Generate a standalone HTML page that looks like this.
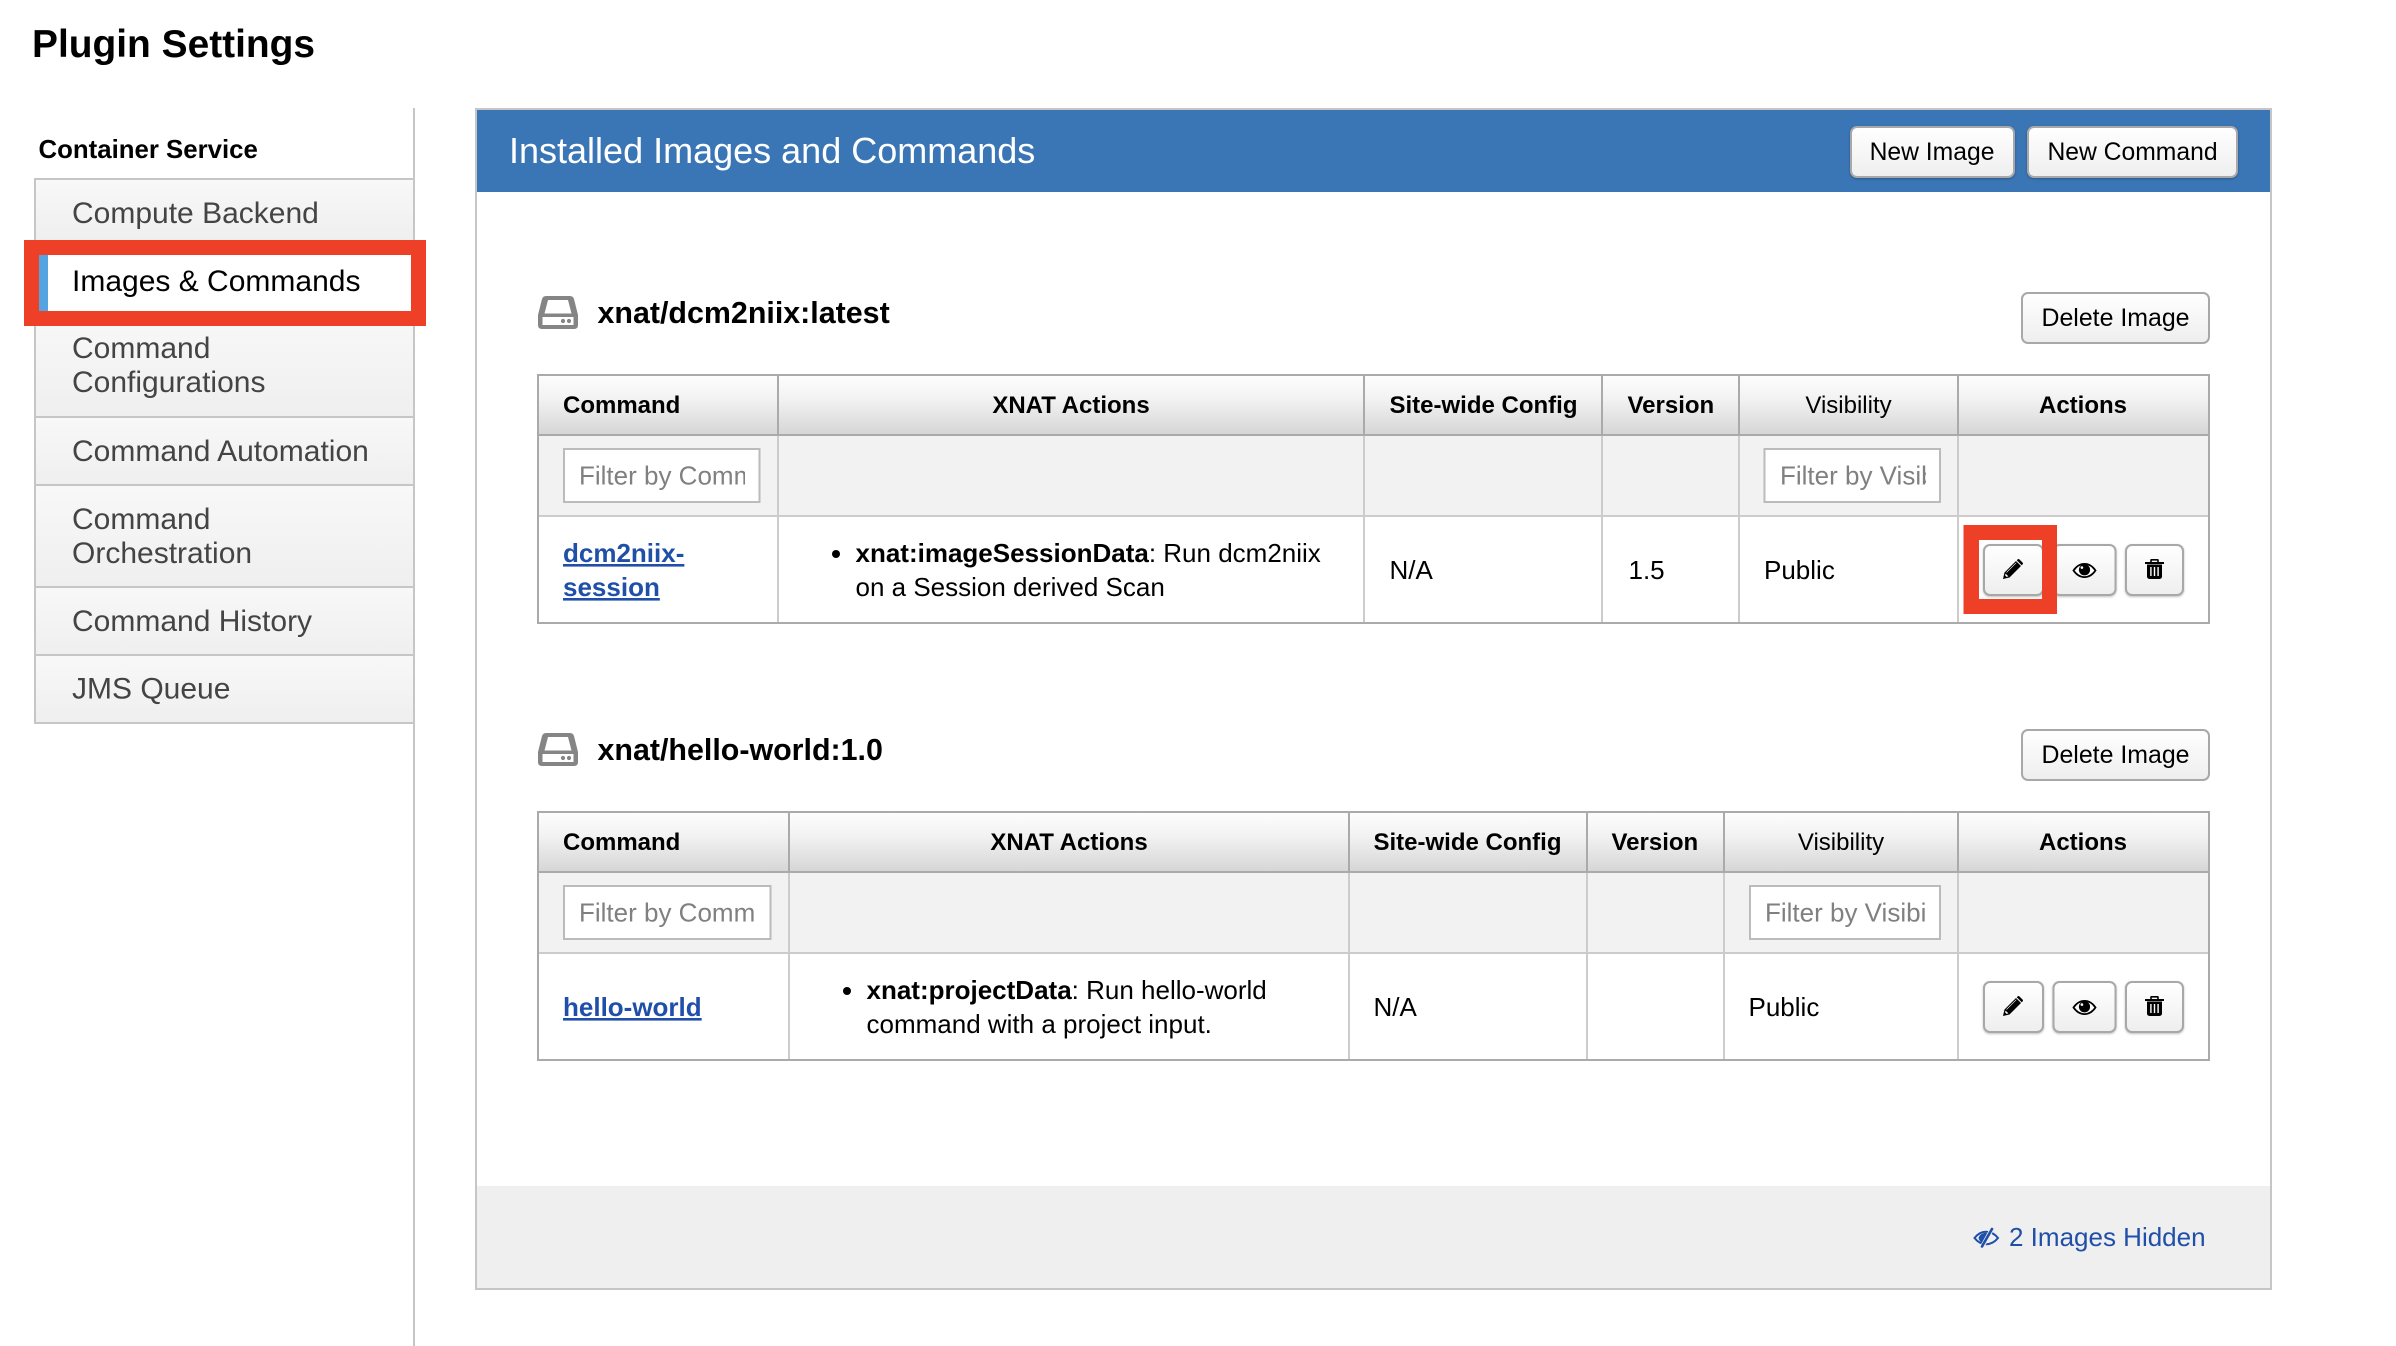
<!DOCTYPE html>
<html lang="en">
<head>
<meta charset="utf-8">
<title>Plugin Settings</title>
<style>
html,body{margin:0;padding:0;background:#fff;width:2396px;height:1346px;overflow:hidden}
svg{display:block}
text{font-family:"Liberation Sans",Arial,sans-serif;fill:#000}
.b{font-weight:bold}
.nav{font-size:30px;fill:#444}
.th{font-size:24px}
.td{font-size:26px}
.ph{font-size:26px;fill:#808080}
.link{font-size:26px;font-weight:bold;fill:#1f4fa8;text-decoration:underline}
.btn{font-size:24.7px;text-anchor:middle}
.del{font-size:24.9px}
.c{text-anchor:middle}
.shadow{filter:drop-shadow(0 1.5px 1px rgba(0,0,0,.25))}
</style>
</head>
<body>
<svg xmlns="http://www.w3.org/2000/svg" width="2396" height="1346" viewBox="0 0 2396 1346">
<defs>
<linearGradient id="g-nav" x1="0" y1="0" x2="0" y2="1"><stop offset="0" stop-color="#f8f8f8"/><stop offset="1" stop-color="#efefef"/></linearGradient>
<linearGradient id="g-th" x1="0" y1="0" x2="0" y2="1"><stop offset="0" stop-color="#fdfdfd"/><stop offset=".4" stop-color="#f2f2f2"/><stop offset="1" stop-color="#d6d6d6"/></linearGradient>
<linearGradient id="g-btn" x1="0" y1="0" x2="0" y2="1"><stop offset="0" stop-color="#ffffff"/><stop offset="1" stop-color="#eeeeee"/></linearGradient>
<clipPath id="c1"><rect x="565" y="450" width="180" height="52"/></clipPath>
<clipPath id="c2"><rect x="1765" y="450" width="161" height="52"/></clipPath>
<clipPath id="c3"><rect x="565" y="887" width="190" height="52"/></clipPath>
<clipPath id="c4"><rect x="1751" y="887" width="176" height="52"/></clipPath>
<symbol id="disk" viewBox="0 0 40 33" overflow="visible">
<path fill="#858585" d="M8 0H32Q35 0 36 3L40 19V29Q40 33 36 33H4Q0 33 0 29V19L4 3Q5 0 8 0Z"/>
<path fill="#fff" d="M10 4H30L33.5 17.5H6.5Z"/>
<rect fill="#fff" x="4.5" y="21" width="31" height="8"/>
<circle fill="#858585" cx="25" cy="25" r="2.1"/><circle fill="#858585" cx="31" cy="25" r="2.1"/>
</symbol>
<symbol id="pencil" viewBox="0 0 20 20" overflow="visible">
<path fill="#000" d="M0 20L1.5 13.5L13 2L18 7L6.5 18.5Z"/>
<path fill="#000" d="M14.5 .5Q15.5-.5 16.5 .5L19.5 3.5Q20.5 4.5 19.5 5.5L18.7 6.2L13.8 1.3Z"/>
<path fill="#fff" d="M2.6 14.6L5.4 17.4L3.6 17.9L2.1 16.4Z"/>
<path stroke="#fff" stroke-width=".6" d="M3.5 13.5L13.3 3.7"/>
</symbol>
<symbol id="eye" viewBox="0 0 24 15" overflow="visible">
<path fill="#fff" stroke="#000" stroke-width="1.8" d="M1 7.5C5 1.8 9 .9 12 .9C15 .9 19 1.8 23 7.5C19 13.2 15 14.1 12 14.1C9 14.1 5 13.2 1 7.5Z"/>
<circle fill="#000" cx="12" cy="6.8" r="5.6"/>
<circle fill="#fff" cx="9.4" cy="4.6" r="1.3"/>
</symbol>
<symbol id="trash" viewBox="0 0 19 20" overflow="visible">
<path fill="none" stroke="#000" stroke-width="1.6" d="M6 3.4V1.2Q6 .8 6.4 .8H12.6Q13 .8 13 1.2V3.4"/>
<rect fill="#000" x="0" y="3" width="19" height="2"/>
<path fill="#000" d="M2 5.5H17V17.5A2.5 2.5 0 0 1 14.5 20H4.5A2.5 2.5 0 0 1 2 17.5Z"/>
<rect fill="#fff" x="5.2" y="8" width="1.4" height="9"/><rect fill="#fff" x="8.8" y="8" width="1.4" height="9"/><rect fill="#fff" x="12.4" y="8" width="1.4" height="9"/>
</symbol>
</defs>

<text class="b" x="32" y="57" font-size="38.9">Plugin Settings</text>

<!-- Sidebar -->
<rect x="413" y="108" width="2" height="1238" fill="#c6c6c6"/>
<text class="b" x="38.5" y="158" font-size="25.8">Container Service</text>
<rect x="34" y="178" width="381" height="546" fill="#c6c6c6"/>
<rect x="36" y="180" width="377" height="60" fill="url(#g-nav)"/>
<rect x="36" y="316" width="377" height="100" fill="url(#g-nav)"/>
<rect x="36" y="418" width="377" height="66" fill="url(#g-nav)"/>
<rect x="36" y="486" width="377" height="100" fill="url(#g-nav)"/>
<rect x="36" y="588" width="377" height="66" fill="url(#g-nav)"/>
<rect x="36" y="656" width="377" height="66" fill="url(#g-nav)"/>
<rect x="36" y="240" width="377" height="76" fill="#fff"/>
<rect x="39" y="255" width="9" height="56" fill="#55a4e2"/>
<text class="nav" x="72" y="223">Compute Backend</text>
<text class="nav" x="72" y="291" style="fill:#000">Images &amp; Commands</text>
<text class="nav" x="72" y="358">Command</text>
<text class="nav" x="72" y="392">Configurations</text>
<text class="nav" x="72" y="461">Command Automation</text>
<text class="nav" x="72" y="529">Command</text>
<text class="nav" x="72" y="563">Orchestration</text>
<text class="nav" x="72" y="631">Command History</text>
<text class="nav" x="72" y="698.5">JMS Queue</text>
<path fill="#ee4026" fill-rule="evenodd" d="M24 240H426V326H24ZM39 255V311H411V255Z"/>

<!-- Panel -->
<rect x="475" y="108" width="1797" height="1182" fill="#c6c6c6"/>
<rect x="477" y="110" width="1793" height="1178" fill="#fff"/>
<rect x="477" y="110" width="1793" height="82" fill="#3a75b5"/>
<rect x="477" y="1186" width="1793" height="102" fill="#efefef"/>
<text x="509" y="163" font-size="36" style="fill:#fff">Installed Images and Commands</text>
<rect class="shadow" x="1851" y="127" width="163" height="50" rx="6" fill="url(#g-btn)" stroke="#a8a8a8" stroke-width="2"/>
<text class="btn" x="1932" y="160">New Image</text>
<rect class="shadow" x="2028" y="127" width="209" height="50" rx="6" fill="url(#g-btn)" stroke="#a8a8a8" stroke-width="2"/>
<text class="btn" x="2132.5" y="160">New Command</text>

<!-- Image 1 -->
<use href="#disk" x="538" y="296" width="40" height="33"/>
<text class="b" x="597.5" y="323" font-size="30.4">xnat/dcm2niix:latest</text>
<rect x="2022" y="293" width="187" height="50" rx="6" fill="url(#g-btn)" stroke="#a8a8a8" stroke-width="2"/>
<text class="btn del" x="2115.5" y="326">Delete Image</text>

<rect x="537" y="374" width="1673" height="250" fill="#aaa"/>
<rect x="539" y="376" width="1669" height="58" fill="url(#g-th)"/>
<rect x="539" y="436" width="1669" height="79" fill="#f2f2f2"/>
<rect x="539" y="515" width="1669" height="2" fill="#ccc"/>
<rect x="539" y="517" width="1669" height="105" fill="#fff"/>
<g fill="#aaa"><rect x="777" y="376" width="2" height="58"/><rect x="1363" y="376" width="2" height="58"/><rect x="1601" y="376" width="2" height="58"/><rect x="1738" y="376" width="2" height="58"/><rect x="1957" y="376" width="2" height="58"/></g>
<g fill="#ccc"><rect x="777" y="436" width="2" height="186"/><rect x="1363" y="436" width="2" height="186"/><rect x="1601" y="436" width="2" height="186"/><rect x="1738" y="436" width="2" height="186"/><rect x="1957" y="436" width="2" height="186"/></g>
<text class="th b" x="563" y="413">Command</text>
<text class="th b c" x="1071" y="413">XNAT Actions</text>
<text class="th b" x="1389.5" y="413">Site-wide Config</text>
<text class="th b" x="1627.5" y="413">Version</text>
<text class="th c" x="1848.5" y="413">Visibility</text>
<text class="th b c" x="2083" y="413">Actions</text>
<rect x="564" y="449" width="195.5" height="53" fill="#fff" stroke="#bbb" stroke-width="2"/>
<text class="ph" x="579" y="484.5" clip-path="url(#c1)">Filter by Command</text>
<rect x="1764.5" y="449" width="175.5" height="53" fill="#fff" stroke="#bbb" stroke-width="2"/>
<text class="ph" x="1780" y="484.5" clip-path="url(#c2)">Filter by Visibility</text>
<text class="link" x="563" y="562">dcm2niix-</text>
<text class="link" x="563" y="596">session</text>
<circle cx="836" cy="554" r="4" fill="#000"/>
<text class="td" x="855.5" y="562"><tspan class="b">xnat:imageSessionData</tspan>: Run dcm2niix</text>
<text class="td" x="855.5" y="596">on a Session derived Scan</text>
<text class="td" x="1389.5" y="579">N/A</text>
<text class="td" x="1628.5" y="579">1.5</text>
<text class="td" x="1764" y="579">Public</text>

<rect class="shadow" x="2053.5" y="545" width="62" height="50" rx="6" fill="url(#g-btn)" stroke="#a8a8a8" stroke-width="2"/>
<use href="#eye" x="2072.5" y="563" width="24" height="15"/>
<rect class="shadow" x="2126" y="545" width="57" height="50" rx="6" fill="url(#g-btn)" stroke="#a8a8a8" stroke-width="2"/>
<use href="#trash" x="2145" y="559" width="19" height="20"/>
<rect class="shadow" x="1984" y="545" width="59" height="50" rx="6" fill="url(#g-btn)" stroke="#a8a8a8" stroke-width="2"/>
<use href="#pencil" x="2003" y="559" width="20" height="20"/>
<path fill="#ee4026" fill-rule="evenodd" d="M1963.5 525H2057V614H1963.5ZM1979 540V599H2042V540Z"/>

<!-- Image 2 -->
<use href="#disk" x="538" y="733" width="40" height="33"/>
<text class="b" x="597.5" y="760" font-size="30.4">xnat/hello-world:1.0</text>
<rect x="2022" y="730" width="187" height="50" rx="6" fill="url(#g-btn)" stroke="#a8a8a8" stroke-width="2"/>
<text class="btn del" x="2115.5" y="763">Delete Image</text>

<rect x="537" y="811" width="1673" height="250" fill="#aaa"/>
<rect x="539" y="813" width="1669" height="58" fill="url(#g-th)"/>
<rect x="539" y="873" width="1669" height="79" fill="#f2f2f2"/>
<rect x="539" y="952" width="1669" height="2" fill="#ccc"/>
<rect x="539" y="954" width="1669" height="105" fill="#fff"/>
<g fill="#aaa"><rect x="788" y="813" width="2" height="58"/><rect x="1348" y="813" width="2" height="58"/><rect x="1586" y="813" width="2" height="58"/><rect x="1723" y="813" width="2" height="58"/><rect x="1957" y="813" width="2" height="58"/></g>
<g fill="#ccc"><rect x="788" y="873" width="2" height="186"/><rect x="1348" y="873" width="2" height="186"/><rect x="1586" y="873" width="2" height="186"/><rect x="1723" y="873" width="2" height="186"/><rect x="1957" y="873" width="2" height="186"/></g>
<text class="th b" x="563" y="850">Command</text>
<text class="th b c" x="1069" y="850">XNAT Actions</text>
<text class="th b" x="1373.5" y="850">Site-wide Config</text>
<text class="th b" x="1611.5" y="850">Version</text>
<text class="th c" x="1841" y="850">Visibility</text>
<text class="th b c" x="2083" y="850">Actions</text>
<rect x="564" y="886" width="206.5" height="53" fill="#fff" stroke="#bbb" stroke-width="2"/>
<text class="ph" x="579" y="921.5" clip-path="url(#c3)">Filter by Command</text>
<rect x="1750" y="886" width="190" height="53" fill="#fff" stroke="#bbb" stroke-width="2"/>
<text class="ph" x="1765" y="921.5" clip-path="url(#c4)">Filter by Visibility</text>
<text class="link" x="563" y="1016">hello-world</text>
<circle cx="847" cy="991" r="4" fill="#000"/>
<text class="td" x="866.5" y="999"><tspan class="b">xnat:projectData</tspan>: Run hello-world</text>
<text class="td" x="866.5" y="1033">command with a project input.</text>
<text class="td" x="1373.5" y="1016">N/A</text>
<text class="td" x="1748.5" y="1016">Public</text>

<rect class="shadow" x="1984" y="982" width="59" height="50" rx="6" fill="url(#g-btn)" stroke="#a8a8a8" stroke-width="2"/>
<use href="#pencil" x="2003" y="996" width="20" height="20"/>
<rect class="shadow" x="2053.5" y="982" width="62" height="50" rx="6" fill="url(#g-btn)" stroke="#a8a8a8" stroke-width="2"/>
<use href="#eye" x="2072.5" y="1000" width="24" height="15"/>
<rect class="shadow" x="2126" y="982" width="57" height="50" rx="6" fill="url(#g-btn)" stroke="#a8a8a8" stroke-width="2"/>
<use href="#trash" x="2145" y="996" width="19" height="20"/>

<!-- Footer -->
<g transform="translate(1973.5,1228)">
<path fill="none" stroke="#1f4fa8" stroke-width="2" d="M1 10C5 5 9 3.8 12.5 3.8C16 3.8 20.5 5 24.5 10C20.5 15 16 16.2 12.5 16.2C9 16.2 5 15 1 10Z"/>
<path fill="#1f4fa8" d="M5 10C6 7 9 5 12.5 4.8L15 6L9 15.5C7 14 5.5 12 5 10Z"/>
<path stroke="#efefef" stroke-width="4.4" d="M8 20L19 0"/>
<path stroke="#1f4fa8" stroke-width="2.6" stroke-linecap="round" d="M8.5 18.5L18.5 1"/>
</g>
<text x="2009" y="1246" font-size="26" style="fill:#1f4fa8">2 Images Hidden</text>
</svg>
</body>
</html>
